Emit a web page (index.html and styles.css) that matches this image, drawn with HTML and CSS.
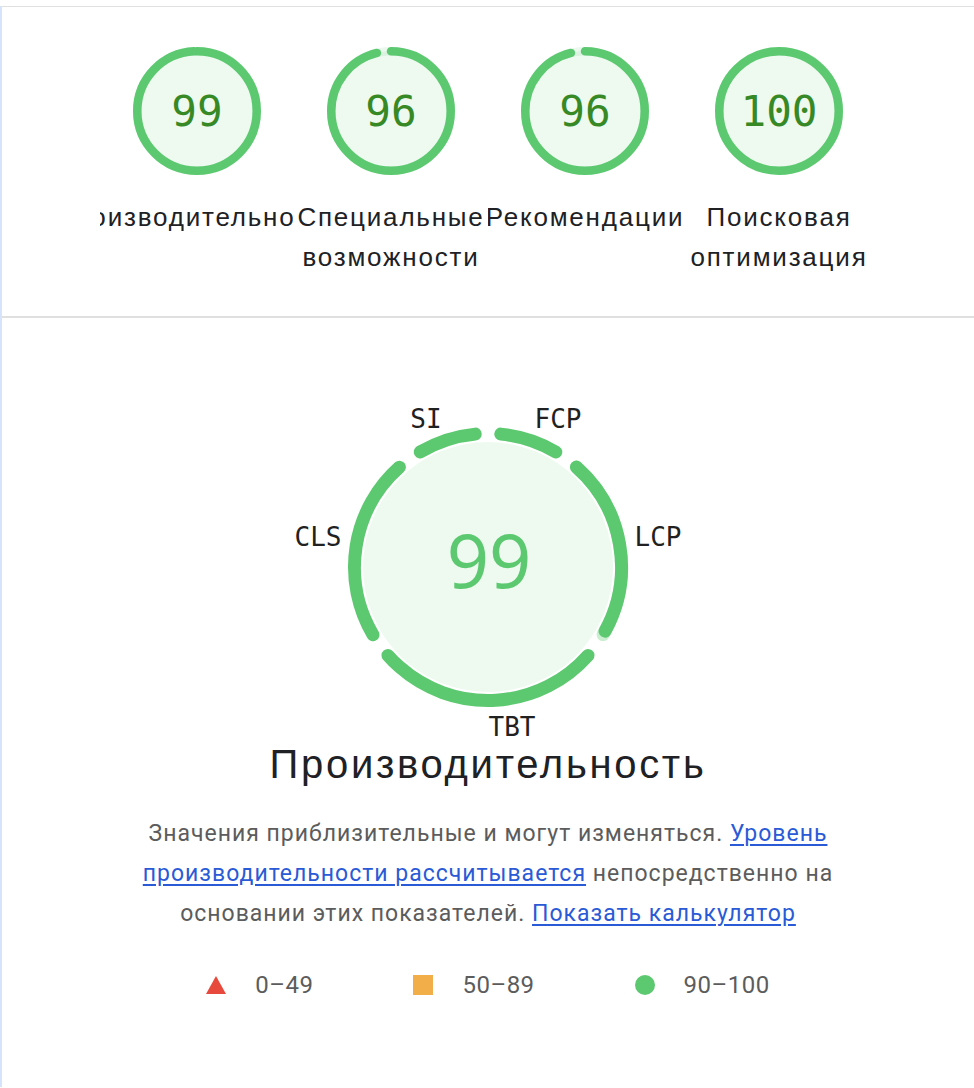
FILE: index.html
```html
<!DOCTYPE html>
<html lang="ru">
<head>
<meta charset="utf-8">
<title>Lighthouse</title>
<link rel="stylesheet" href="styles.css">
</head>
<body>
<div class="top-gap"></div>
<main class="report">
  <section class="scores">
    <div class="gauge-col">
      <svg class="gauge" viewBox="0 0 120 120" width="128" height="128">
        <circle class="g-fill" cx="60" cy="60" r="56"/>
        <circle class="g-base" cx="60" cy="60" r="56"/>
        <circle class="g-arc" cx="60" cy="60" r="56" transform="rotate(-90 60 60)" stroke-dasharray="348.5 352"/>
        <text class="g-num" x="60" y="60">99</text>
      </svg>
      <div class="g-label"><span>Производительность</span></div>
    </div>
    <div class="gauge-col">
      <svg class="gauge" viewBox="0 0 120 120" width="128" height="128">
        <circle class="g-fill" cx="60" cy="60" r="56"/>
        <circle class="g-base" cx="60" cy="60" r="56"/>
        <circle class="g-arc" cx="60" cy="60" r="56" transform="rotate(-90 60 60)" stroke-dasharray="337.9 352"/>
        <text class="g-num" x="60" y="60">96</text>
      </svg>
      <div class="g-label"><span>Специальные возможности</span></div>
    </div>
    <div class="gauge-col">
      <svg class="gauge" viewBox="0 0 120 120" width="128" height="128">
        <circle class="g-fill" cx="60" cy="60" r="56"/>
        <circle class="g-base" cx="60" cy="60" r="56"/>
        <circle class="g-arc" cx="60" cy="60" r="56" transform="rotate(-90 60 60)" stroke-dasharray="337.9 352"/>
        <text class="g-num" x="60" y="60">96</text>
      </svg>
      <div class="g-label"><span>Рекомендации</span></div>
    </div>
    <div class="gauge-col">
      <svg class="gauge" viewBox="0 0 120 120" width="128" height="128">
        <circle class="g-fill" cx="60" cy="60" r="56"/>
        <circle class="g-base" cx="60" cy="60" r="56"/>
        <circle class="g-arc" cx="60" cy="60" r="56" transform="rotate(-90 60 60)" stroke-dasharray="352 352"/>
        <text class="g-num" x="60" y="60">100</text>
      </svg>
      <div class="g-label"><span>Поисковая оптимизация</span></div>
    </div>
  </section>

  <section class="perf">
    <svg class="exp-gauge" viewBox="0 0 420 349" width="420" height="349">
      <circle class="x-fill" cx="210" cy="176" r="125"/>
      <circle class="x-base" cx="210" cy="176" r="133.5" transform="rotate(-48.5 210 176)" stroke-dasharray="183.8 839"/>
      <circle class="x-arc" cx="210" cy="176" r="133.5" transform="rotate(-84.5 210 176)" stroke-dasharray="58.3 839"/>
      <circle class="x-arc" cx="210" cy="176" r="133.5" transform="rotate(-48.5 210 176)" stroke-dasharray="179.8 839"/>
      <circle class="x-arc" cx="210" cy="176" r="133.5" transform="rotate(41.5 210 176)" stroke-dasharray="226.0 839"/>
      <circle class="x-arc" cx="210" cy="176" r="133.5" transform="rotate(149.5 210 176)" stroke-dasharray="183.8 839"/>
      <circle class="x-arc" cx="210" cy="176" r="133.5" transform="rotate(239.5 210 176)" stroke-dasharray="58.3 839"/>
      <text class="x-num" x="211" y="197">99</text>
      <text class="x-lbl" x="148" y="37">SI</text>
      <text class="x-lbl" x="280" y="37">FCP</text>
      <text class="x-lbl" x="40" y="155">CLS</text>
      <text class="x-lbl" x="380" y="155">LCP</text>
      <text class="x-lbl" x="234" y="345">TBT</text>
    </svg>
    <h1 class="perf-title">Производительность</h1>
    <p class="perf-desc">Значения приблизительные и могут изменяться. <a href="#">Уровень производительности рассчитывается</a> непосредственно на основании этих показателей. <a href="#">Показать калькулятор</a></p>
    <ul class="legend">
      <li class="legend-item"><span class="ico ico-fail"></span>0–49</li>
      <li class="legend-item"><span class="ico ico-avg"></span>50–89</li>
      <li class="legend-item"><span class="ico ico-pass"></span>90–100</li>
    </ul>
  </section>
</main>
</body>
</html>
```
FILE: styles.css
```css
html, body {
  margin: 0;
  padding: 0;
  background: #ffffff;
}
body {
  font-family: "Liberation Sans", Arial, sans-serif;
  color: #212121;
}
.top-gap {
  height: 6px;
}
.report {
  border-left: 2px solid #d6e3fd;
  border-top: 1px solid #e0e0e0;
  min-height: 1081px;
  box-sizing: border-box;
}
.scores {
  display: flex;
  justify-content: center;
  padding: 40px 0 0;
  height: 311px;
  box-sizing: border-box;
  border-bottom: 2px solid #e0e0e0;
}
.gauge-col {
  width: 194px;
  display: flex;
  flex-direction: column;
  align-items: center;
}
.gauge {
  display: block;
}
.g-fill {
  fill: #eef9f0;
}
.g-base {
  fill: none;
  stroke: #5cc970;
  stroke-opacity: 0.12;
  stroke-width: 8;
}
.g-arc {
  fill: none;
  stroke: #5cc970;
  stroke-width: 8;
  stroke-linecap: round;
}
.g-num {
  font-family: "DejaVu Sans Mono", monospace;
  font-size: 40px;
  fill: #368925;
  text-anchor: middle;
  dominant-baseline: central;
}
.g-label {
  margin-top: 22px;
  width: 194px;
  display: flex;
  justify-content: center;
  overflow: hidden;
  font-size: 26px;
  line-height: 40px;
  letter-spacing: 1.8px;
  text-align: center;
  color: #202124;
}
.perf {
  padding-top: 73px;
  display: flex;
  flex-direction: column;
  align-items: center;
}
.exp-gauge {
  display: block;
  overflow: visible;
}
.x-fill {
  fill: #eefaf0;
}
.x-base {
  fill: none;
  stroke: #c9eed0;
  stroke-width: 13;
  stroke-linecap: round;
}
.x-arc {
  fill: none;
  stroke: #5cc970;
  stroke-width: 13;
  stroke-linecap: round;
}
.x-num {
  font-family: "Noto Sans", sans-serif;
  font-size: 74px;
  fill: #5cc970;
  text-anchor: middle;
}
.x-lbl {
  font-family: "DejaVu Sans Mono", monospace;
  font-size: 26px;
  fill: #212121;
  text-anchor: middle;
}
.perf-title {
  margin: 0;
  font-weight: normal;
  font-size: 40px;
  line-height: 48px;
  letter-spacing: 2.7px;
  color: #202124;
}
.perf-desc {
  margin: 26px 0 0;
  width: 705px;
  text-align: center;
  font-family: Roboto, sans-serif;
  font-size: 23px;
  line-height: 40px;
  letter-spacing: 1px;
  color: #5c5c5c;
}
.perf-desc a {
  color: #2a5ad6;
  text-decoration: underline;
  text-underline-offset: 3px;
}
.legend {
  list-style: none;
  margin: 37px 0 0;
  padding: 0;
  display: flex;
  gap: 100px;
  font-family: Roboto, sans-serif;
  font-size: 24px;
  line-height: 28px;
  letter-spacing: 0.5px;
  color: #5c5c5c;
}
.legend-item {
  display: flex;
  align-items: center;
}
.ico {
  display: inline-block;
  width: 20px;
  height: 20px;
  margin-right: 29px;
}
.ico-fail {
  width: 0;
  height: 0;
  border-left: 10px solid transparent;
  border-right: 10px solid transparent;
  border-bottom: 18px solid #e8493d;
}
.ico-avg {
  background: #f2ae49;
}
.ico-pass {
  background: #5cc970;
  border-radius: 50%;
}
```
